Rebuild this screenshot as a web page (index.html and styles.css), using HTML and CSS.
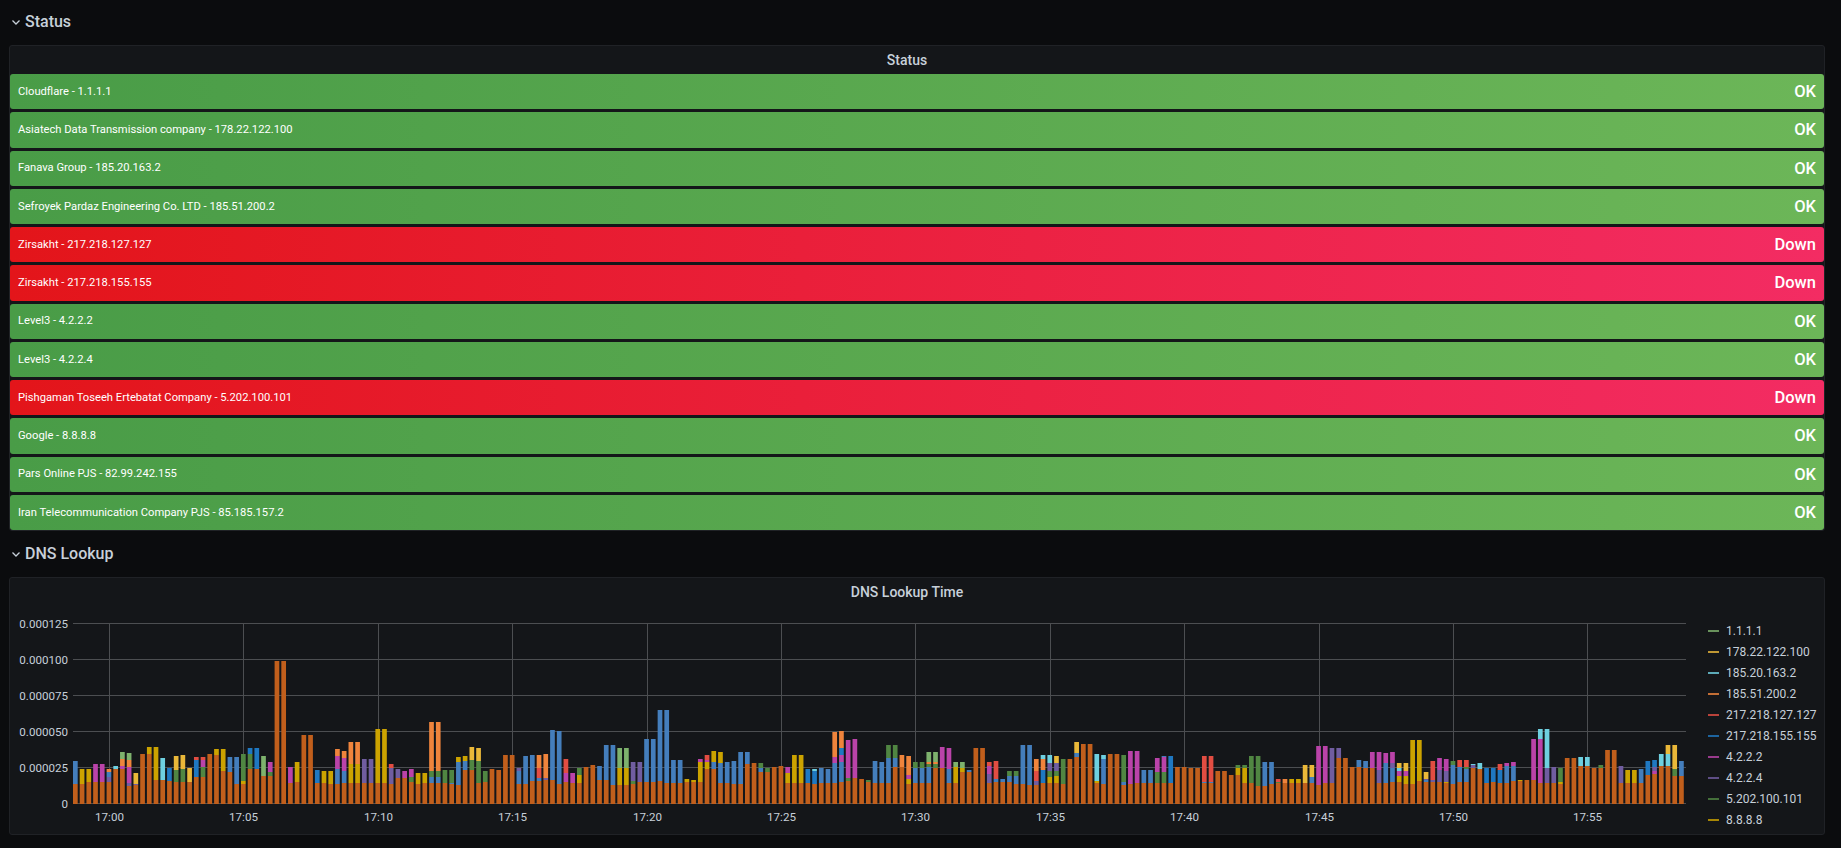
FILE: index.html
```html
<!DOCTYPE html>
<html lang="en">
<head>
    <meta charset="UTF-8">
    <meta name="viewport" content="width=device-width, initial-scale=1.0">
    <title>DNS Status</title>
    <link rel="stylesheet" href="styles.css">
</head>
<body>

<main class="dashboard">
    <header class="row-head row-head-first">
        <svg class="chevron" width="10" height="10" viewBox="0 0 10 10"><path d="M1.5 3.5 5 7l3.5-3.5"/></svg>
        <h2>Status</h2>
    </header>

    <section class="panel panel-status">
        <h3 class="panel-title">Status</h3>
        <div class="gauges">
            <div class="gauge ok"><span class="gauge-name">Cloudflare - 1.1.1.1</span><span class="gauge-value">OK</span></div>
            <div class="gauge ok"><span class="gauge-name">Asiatech Data Transmission company - 178.22.122.100</span><span class="gauge-value">OK</span></div>
            <div class="gauge ok"><span class="gauge-name">Fanava Group - 185.20.163.2</span><span class="gauge-value">OK</span></div>
            <div class="gauge ok"><span class="gauge-name">Sefroyek Pardaz Engineering Co. LTD - 185.51.200.2</span><span class="gauge-value">OK</span></div>
            <div class="gauge down"><span class="gauge-name">Zirsakht - 217.218.127.127</span><span class="gauge-value">Down</span></div>
            <div class="gauge down"><span class="gauge-name">Zirsakht - 217.218.155.155</span><span class="gauge-value">Down</span></div>
            <div class="gauge ok"><span class="gauge-name">Level3 - 4.2.2.2</span><span class="gauge-value">OK</span></div>
            <div class="gauge ok"><span class="gauge-name">Level3 - 4.2.2.4</span><span class="gauge-value">OK</span></div>
            <div class="gauge down"><span class="gauge-name">Pishgaman Toseeh Ertebatat Company - 5.202.100.101</span><span class="gauge-value">Down</span></div>
            <div class="gauge ok"><span class="gauge-name">Google - 8.8.8.8</span><span class="gauge-value">OK</span></div>
            <div class="gauge ok"><span class="gauge-name">Pars Online PJS - 82.99.242.155</span><span class="gauge-value">OK</span></div>
            <div class="gauge ok"><span class="gauge-name">Iran Telecommunication Company PJS - 85.185.157.2</span><span class="gauge-value">OK</span></div>
        </div>
    </section>

    <header class="row-head">
        <svg class="chevron" width="10" height="10" viewBox="0 0 10 10"><path d="M1.5 3.5 5 7l3.5-3.5"/></svg>
        <h2>DNS Lookup</h2>
    </header>

    <section class="panel panel-graph">
        <h3 class="panel-title">DNS Lookup Time</h3>
        <div class="graph">
            <svg id="plot" class="plot" width="1690" height="228"></svg>
            <ul class="legend">
                <li><i class="key k-G"></i>1.1.1.1</li>
                <li><i class="key k-Y"></i>178.22.122.100</li>
                <li><i class="key k-c"></i>185.20.163.2</li>
                <li><i class="key k-O"></i>185.51.200.2</li>
                <li><i class="key k-r"></i>217.218.127.127</li>
                <li><i class="key k-B"></i>217.218.155.155</li>
                <li><i class="key k-p"></i>4.2.2.2</li>
                <li><i class="key k-v"></i>4.2.2.4</li>
                <li><i class="key k-g"></i>5.202.100.101</li>
                <li><i class="key k-y"></i>8.8.8.8</li>
            </ul>
        </div>
    </section>
</main>

<script src="chart.js"></script>

</body>
</html>
```

FILE: styles.css
```css
* {
    box-sizing: border-box;
}
body {
    margin: 0;
    height: 848px;
    overflow: hidden;
    background-color: #0b0c0e;
    font-family: Roboto, "Liberation Sans", sans-serif;
    color: #c7d0d9;
}
.dashboard {
    padding: 0 16px 0 9px;
}
.row-head {
    display: flex;
    align-items: center;
    gap: 4px;
    height: 46px;
    padding: 0 0 2px 2px;
    color: #c7d0d9;
}
.row-head-first {
    height: 45px;
    padding-bottom: 3px;
}
.row-head h2 {
    margin: 0;
    font-size: 16px;
    font-weight: 500;
}
.chevron {
    margin-top: 2px;
}
.chevron path {
    fill: none;
    stroke: #c7d0d9;
    stroke-width: 1.3;
}
.panel {
    display: flex;
    flex-direction: column;
    background-color: #141619;
    border: 1px solid #202226;
    border-radius: 3px;
}
.panel-status {
    height: 486px;
}
.panel-graph {
    height: 258px;
}
.panel-title {
    flex: none;
    height: 28px;
    margin: 0;
    padding-right: 20px;
    line-height: 28px;
    text-align: center;
    font-size: 14px;
    font-weight: 500;
}
.gauges {
    flex: 1;
    display: flex;
    flex-direction: column;
    gap: 3px;
}
.gauge {
    flex: 1;
    display: flex;
    align-items: center;
    justify-content: space-between;
    padding: 0 8px;
    border-radius: 3px;
    color: #fff;
}
.gauge.ok {
    background: linear-gradient(90deg, #499c47, #6cb658);
}
.gauge.down {
    background: linear-gradient(90deg, #e3151a, #f32c63);
}
.gauge-name {
    font-size: 11.2px;
    margin-bottom: 0.5px;
}
.gauge-value {
    font-size: 16.5px;
    font-weight: 500;
}
.graph {
    display: flex;
}
.plot {
    flex: none;
}
.plot text {
    font-family: Roboto, "Liberation Sans", sans-serif;
    font-size: 11.6px;
    fill: #c7d0d9;
}
.plot .grid {
    stroke: #4c4e51;
    stroke-width: 1;
}
.legend {
    flex: 1;
    height: 222px;
    margin: 0;
    padding: 14px 0 0 8px;
    overflow: hidden;
    list-style: none;
    font-size: 12px;
}
.legend li {
    display: flex;
    align-items: center;
    gap: 7px;
    height: 21px;
}
.key {
    width: 11px;
    height: 2px;
    opacity: 0.8;
}

.s-o { fill: #c15f1c; }
.s-b { fill: #447ebc; }
.s-B { fill: #1f78c1; }
.s-g { fill: #508642; }
.s-G { fill: #7eb26d; }
.s-y { fill: #cca300; }
.s-Y { fill: #eab839; }
.s-c { fill: #6ed0e0; }
.s-p { fill: #ba43a9; }
.s-v { fill: #705da0; }
.s-r { fill: #e24d42; }
.s-O { fill: #ef843c; }

.k-G { background: #7eb26d; }
.k-Y { background: #eab839; }
.k-c { background: #6ed0e0; }
.k-O { background: #ef843c; }
.k-r { background: #e24d42; }
.k-B { background: #1f78c1; }
.k-p { background: #ba43a9; }
.k-v { background: #705da0; }
.k-g { background: #508642; }
.k-y { background: #cca300; }
```

FILE: chart.js
```js
// one string per bar, segments stacked bottom to top: series letter + height in px
const bars = [
    "o20 b23", "o20 y15", "o22 y13", "o22 p18", "o22 p18", "o22 v5 b5 O3", "o35 c3", "o35 p3 O7 G7", "o18 v3 p16 O7 G7", "o19 v1 Y11",
    "o50", "o50 y7", "o24 y33", "o24 c22", "o23 B13", "o22 g12 Y14", "o22 g13 Y14", "o22 Y14", "o27 B17 r3", "o27 g10 p7 r3",
    "o50", "o49 y6", "o33 y22", "o32 b15", "o20 b27", "o20 y3 g27", "o35 g15 B6", "o35 B21", "o28 G20", "o28 g4 p10",
    "o143", "o143", "o21 p16", "o22 y20", "o69", "o69", "o21 B13", "o21 y12", "o20 y13", "o20 b15 p13 O7",
    "o21 b12 p13 O7", "o21 y19 O22", "o21 y19 O22", "o21 v24", "o21 v24", "o21 y54", "o21 y54", "o20 v16 r4", "o26 v9", "o26 p7",
    "o22 g5 p8", "o20 y11", "o21 y10", "o21 b6 g6 O49", "o21 b6 g6 O49", "o21 g13", "o20 b1 g13", "o19 b23 y5", "o34 b9 y5", "o34 g10 Y13",
    "o21 g22 Y13", "o22 g11", "o35", "o34", "o49", "o49", "o20 b13 v3", "o20 b28", "o23 b26", "o23 b3 r10 O13",
    "o24 v2 O24", "o24 b50", "o20 b53", "o22 p9 r14", "o21 p10", "o21 y8 g7", "o37", "o39", "o24 b14", "o24 b35",
    "o19 b40", "o19 y17 G20", "o19 y17 G20", "o20 g3 v19", "o22 v20", "o22 b43", "o22 b43", "o23 b71", "o21 b73", "o21 b23",
    "o21 b23", "o22 y3", "o22 y2", "o22 y20 p3", "o35 y7 p2 r5", "o35 b7 y11", "o21 b20 y11", "o21 b21", "o20 b23", "o20 b32",
    "o40 b12", "o41", "o32 b4 g5", "o32 g4", "o37", "o38", "o21 y10 p6", "o21 y28", "o21 y28", "o21 B14",
    "o20 B13 c2", "o21 b15", "o21 b14", "o21 b20 p6 O25", "o22 b20 p7 B7 O17", "o23 g3 p38", "o26 p39", "o25", "o22 g2", "o21 b22",
    "o21 b21", "o21 b25 g13", "o37 b9 g13", "o37 O12", "o20 y5 p4 O19", "o21 b15 g6", "o21 b15 g6", "o21 b16 g3 O2 G10", "o36 g4 O2 G10", "o36 p21",
    "o21 b14 p21", "o21 y16 G5", "o32 y4 G6", "o32 b2", "o56", "o56", "o21 v9 p8 r4", "o22 b3 r18", "o22 b3", "o22 b6 g5",
    "o20 b8 g5", "o20 b39", "o19 b40", "o19 v4 r10 O12", "o21 B13 O11 c4", "o21 y6 g6 v8 c8", "o21 y7 g5 v8 Y7", "o20 g25", "o45", "o47 b4 Y11",
    "o60", "o60", "o21 y2 c27", "o20 b25 c4", "o50", "o50", "o19 b3 g27", "o20 p33", "o21 p32", "o21 b13",
    "o21 b13", "o21 g11 p14", "o21 g11 p15 b1", "o21 B27", "o37", "o37", "o36", "o36", "o21 b1 r26", "o21 b1 r26",
    "o33", "o33", "o29", "o29 y7 g3", "o21 y15 g3", "o21 g27", "o18 g30", "o18 b24", "o20 b22", "o21 g1 r3",
    "o21 O4", "o21 y4", "o21 y4", "o21 Y18", "o21 b6 Y12", "o19 p39", "o21 p37", "o21 v35", "o46 v10", "o46",
    "o37", "o37 b7", "o36 b7", "o36 p16", "o21 v13 p18", "o21 b20 p10", "o22 b14 v5 p11", "o22 y6 p5 c3 Y5", "o20 y8 p5 Y8", "o20 y44",
    "o23 y41", "o22 b2 v1 Y7", "o22 v2 r19", "o22 v12 p12", "o21 y1 v11 p12", "o20 b19 g4", "o22 b15 r7", "o22 b13 g2 r7", "o36 v3 c1", "o35 c6",
    "o21 B15", "o22 B14", "o21 B13 r6", "o21 b17 p3", "o23 b15 p4", "o23 y1", "o24", "o24 p41", "o21 p44 c10", "o21 v15 c39",
    "o21 v16", "o20 y2 g14", "o46", "o46", "o38 c9", "o38 c9", "o36", "o36 g3", "o54", "o54",
    "o21 v17", "o21 y13", "o21 y13", "o21 b14", "o29 B14", "o30 p3 v4 B7", "o38 c12", "o38 c12 Y9", "o28 g7 Y24", "o28 b15"
];

const NS = "http://www.w3.org/2000/svg";
const plot = document.getElementById("plot");
const LEFT = 63, RIGHT = 1676, BASE = 198, STEP = 6.72, BAR = 4.7;

function add(tag, attrs, text) {
    let el = document.createElementNS(NS, tag);
    for (let k in attrs) el.setAttribute(k, attrs[k]);
    if (text) el.textContent = text;
    plot.appendChild(el);
}

// horizontal grid and y labels
["0", "0.000025", "0.000050", "0.000075", "0.000100", "0.000125"].forEach((label, i) => {
    let y = Math.round(BASE - i * 36.1) - 0.5;
    add("line", { class: "grid", x1: LEFT, x2: RIGHT, y1: y, y2: y });
    add("text", { x: 58, y: y + 4, "text-anchor": "end" }, label);
});

// vertical grid and time labels
for (let i = 0; i < 12; i++) {
    let x = Math.round(99 + i * 134.4) + 0.5;
    add("line", { class: "grid", x1: x, x2: x, y1: 17.5, y2: BASE });
    let min = String(i * 5).padStart(2, "0");
    add("text", { x: x, y: BASE + 17, "text-anchor": "middle" }, `17:${min}`);
}

bars.forEach((bar, i) => {
    let y = BASE;
    bar.split(" ").forEach(seg => {
        let h = parseInt(seg.slice(1));
        y -= h;
        add("rect", { class: "s-" + seg[0], x: LEFT + i * STEP, y: y, width: BAR, height: h });
    });
});
```
